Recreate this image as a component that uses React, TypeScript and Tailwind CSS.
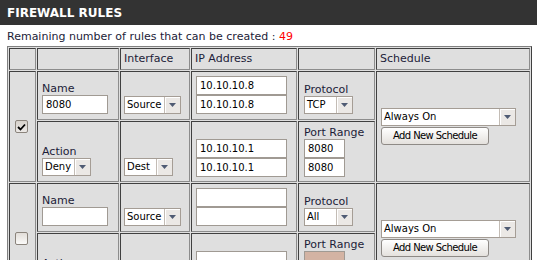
import type { ReactNode } from "react";

const Cell = ({ className = "", children }: { className?: string; children?: ReactNode }) => (
  <div
    className={`bg-[#dfdfdf] border border-t-[#404040] border-l-[#404040] border-r-[#8c8c8c] border-b-[#8c8c8c] ${className}`}
  >
    {children}
  </div>
);

const Label = ({ children }: { children: ReactNode }) => (
  <div className="leading-[13px] whitespace-nowrap">{children}</div>
);

const Field = ({ value = "", width, disabled = false }: { value?: string; width: string; disabled?: boolean }) => (
  <input
    readOnly
    value={value}
    className={`${width} block h-[19px] border border-[#a09a93] px-[3px] text-[10px] text-black outline-none ${
      disabled ? "bg-[#d3b3a3]" : "bg-white"
    }`}
  />
);

const Select = ({ value, width }: { value: string; width: string }) => (
  <div className={`${width} flex h-[18px] border border-[#a59d95] bg-white`}>
    <span className="flex-1 overflow-hidden whitespace-nowrap pl-[2px] text-[10px] leading-[16px] text-black">
      {value}
    </span>
    <span className="flex h-full w-[16px] items-center justify-center border-l border-[#c3bcb5] bg-[#ebe8e5] shadow-[inset_1px_1px_0_#ffffff]">
      <svg width="7" height="4" viewBox="0 0 7 4">
        <path d="M0 0h7L3.5 4z" fill="#4f5b73" />
      </svg>
    </span>
  </div>
);

const Check = ({ checked }: { checked: boolean }) => (
  <div
    className={`flex h-[13px] w-[13px] items-center justify-center rounded-[2px] border border-[#8b847c] ${
      checked ? "bg-gradient-to-b from-[#d6d1cb] to-[#ece9e6]" : "bg-gradient-to-b from-[#e2ded9] to-[#fbfaf9]"
    }`}
  >
    {checked && (
      <svg width="9" height="8" viewBox="0 0 9 8">
        <path d="M1 4l2.5 2.5L8 1.5" fill="none" stroke="#000" strokeWidth="1.8" />
      </svg>
    )}
  </div>
);

const ScheduleCell = () => (
  <Cell className="row-span-2 flex flex-col justify-center gap-px pl-[4px]">
    <Select value="Always On" width="w-[135px]" />
    <button className="h-[18px] w-[108px] rounded-[3px] border border-[#8e8a86] bg-gradient-to-b from-white to-[#e4e1dd] text-[10px] leading-[16px] tracking-[-0.6px] text-black">
      Add New Schedule
    </button>
  </Cell>
);

type Rule = {
  enabled: boolean;
  name: string;
  action: string;
  srcFrom: string;
  srcTo: string;
  dstFrom: string;
  dstTo: string;
  protocol: string;
  portFrom: string;
  portTo: string;
};

const rules: Rule[] = [
  {
    enabled: true,
    name: "8080",
    action: "Deny",
    srcFrom: "10.10.10.8",
    srcTo: "10.10.10.8",
    dstFrom: "10.10.10.1",
    dstTo: "10.10.10.1",
    protocol: "TCP",
    portFrom: "8080",
    portTo: "8080",
  },
  {
    enabled: false,
    name: "",
    action: "Deny",
    srcFrom: "",
    srcTo: "",
    dstFrom: "",
    dstTo: "",
    protocol: "All",
    portFrom: "",
    portTo: "",
  },
];

const RuleRows = ({ rule }: { rule: Rule }) => {
  const noPorts = rule.protocol === "All";
  return (
    <>
      <Cell className="row-span-2 flex items-center pl-[5px]">
        <Check checked={rule.enabled} />
      </Cell>
      <Cell className="flex flex-col justify-end pb-[5px] pl-[4px]">
        <Label>Name</Label>
        <Field value={rule.name} width="w-[66px]" />
      </Cell>
      <Cell className="flex flex-col justify-end pb-[5px] pl-[3px]">
        <Select value="Source" width="w-[57px]" />
      </Cell>
      <Cell className="flex flex-col justify-end pb-[5px] pl-[4px]">
        <Field value={rule.srcFrom} width="w-[91px]" />
        <Field value={rule.srcTo} width="w-[91px]" />
      </Cell>
      <Cell className="flex flex-col justify-end pb-[5px] pl-[5px]">
        <Label>Protocol</Label>
        <Select value={rule.protocol} width="w-[49px]" />
      </Cell>
      <ScheduleCell />

      <Cell className="flex flex-col justify-end pb-[5px] pl-[4px]">
        <Label>Action</Label>
        <Select value={rule.action} width="w-[49px]" />
      </Cell>
      <Cell className="flex flex-col justify-end pb-[5px] pl-[3px]">
        <Select value="Dest" width="w-[49px]" />
      </Cell>
      <Cell className="flex flex-col justify-end pb-[4px] pl-[4px]">
        <Field value={rule.dstFrom} width="w-[91px]" />
        <Field value={rule.dstTo} width="w-[91px]" />
      </Cell>
      <Cell className="flex flex-col justify-end pb-[4px] pl-[5px]">
        <Label>Port Range</Label>
        <Field value={rule.portFrom} width="w-[41px]" disabled={noPorts} />
        <Field value={rule.portTo} width="w-[41px]" disabled={noPorts} />
      </Cell>
    </>
  );
};

export default function App() {
  return (
    <div className="h-[260px] w-[537px] overflow-hidden bg-white font-['DejaVu_Sans',sans-serif] text-[11px] text-[#1c1c38]">
      <div className="h-[25px] bg-[#333333] pl-[7px] pt-[6px] text-[12px] font-bold leading-[14px] text-white">
        FIREWALL RULES
      </div>
      <p className="mt-[5px] pl-[7px] leading-[13px]">
        Remaining number of rules that can be created : <span className="text-[#ff0000]">49</span>
      </p>
      <div className="ml-[7px] mt-[3px] grid w-[525px] grid-cols-[27px_82px_70px_106px_77px_154px] grid-rows-[22px_49px_61px_49px_61px] gap-px border border-t-[#808080] border-l-[#808080] border-r-[#404040] border-b-[#404040] bg-[#dfdfdf] p-px">
        <Cell />
        <Cell />
        <Cell className="flex items-center pl-[3px]">Interface</Cell>
        <Cell className="flex items-center pl-[3px]">IP Address</Cell>
        <Cell />
        <Cell className="flex items-center pl-[3px]">Schedule</Cell>
        {rules.map((rule, i) => (
          <RuleRows key={i} rule={rule} />
        ))}
      </div>
    </div>
  );
}
